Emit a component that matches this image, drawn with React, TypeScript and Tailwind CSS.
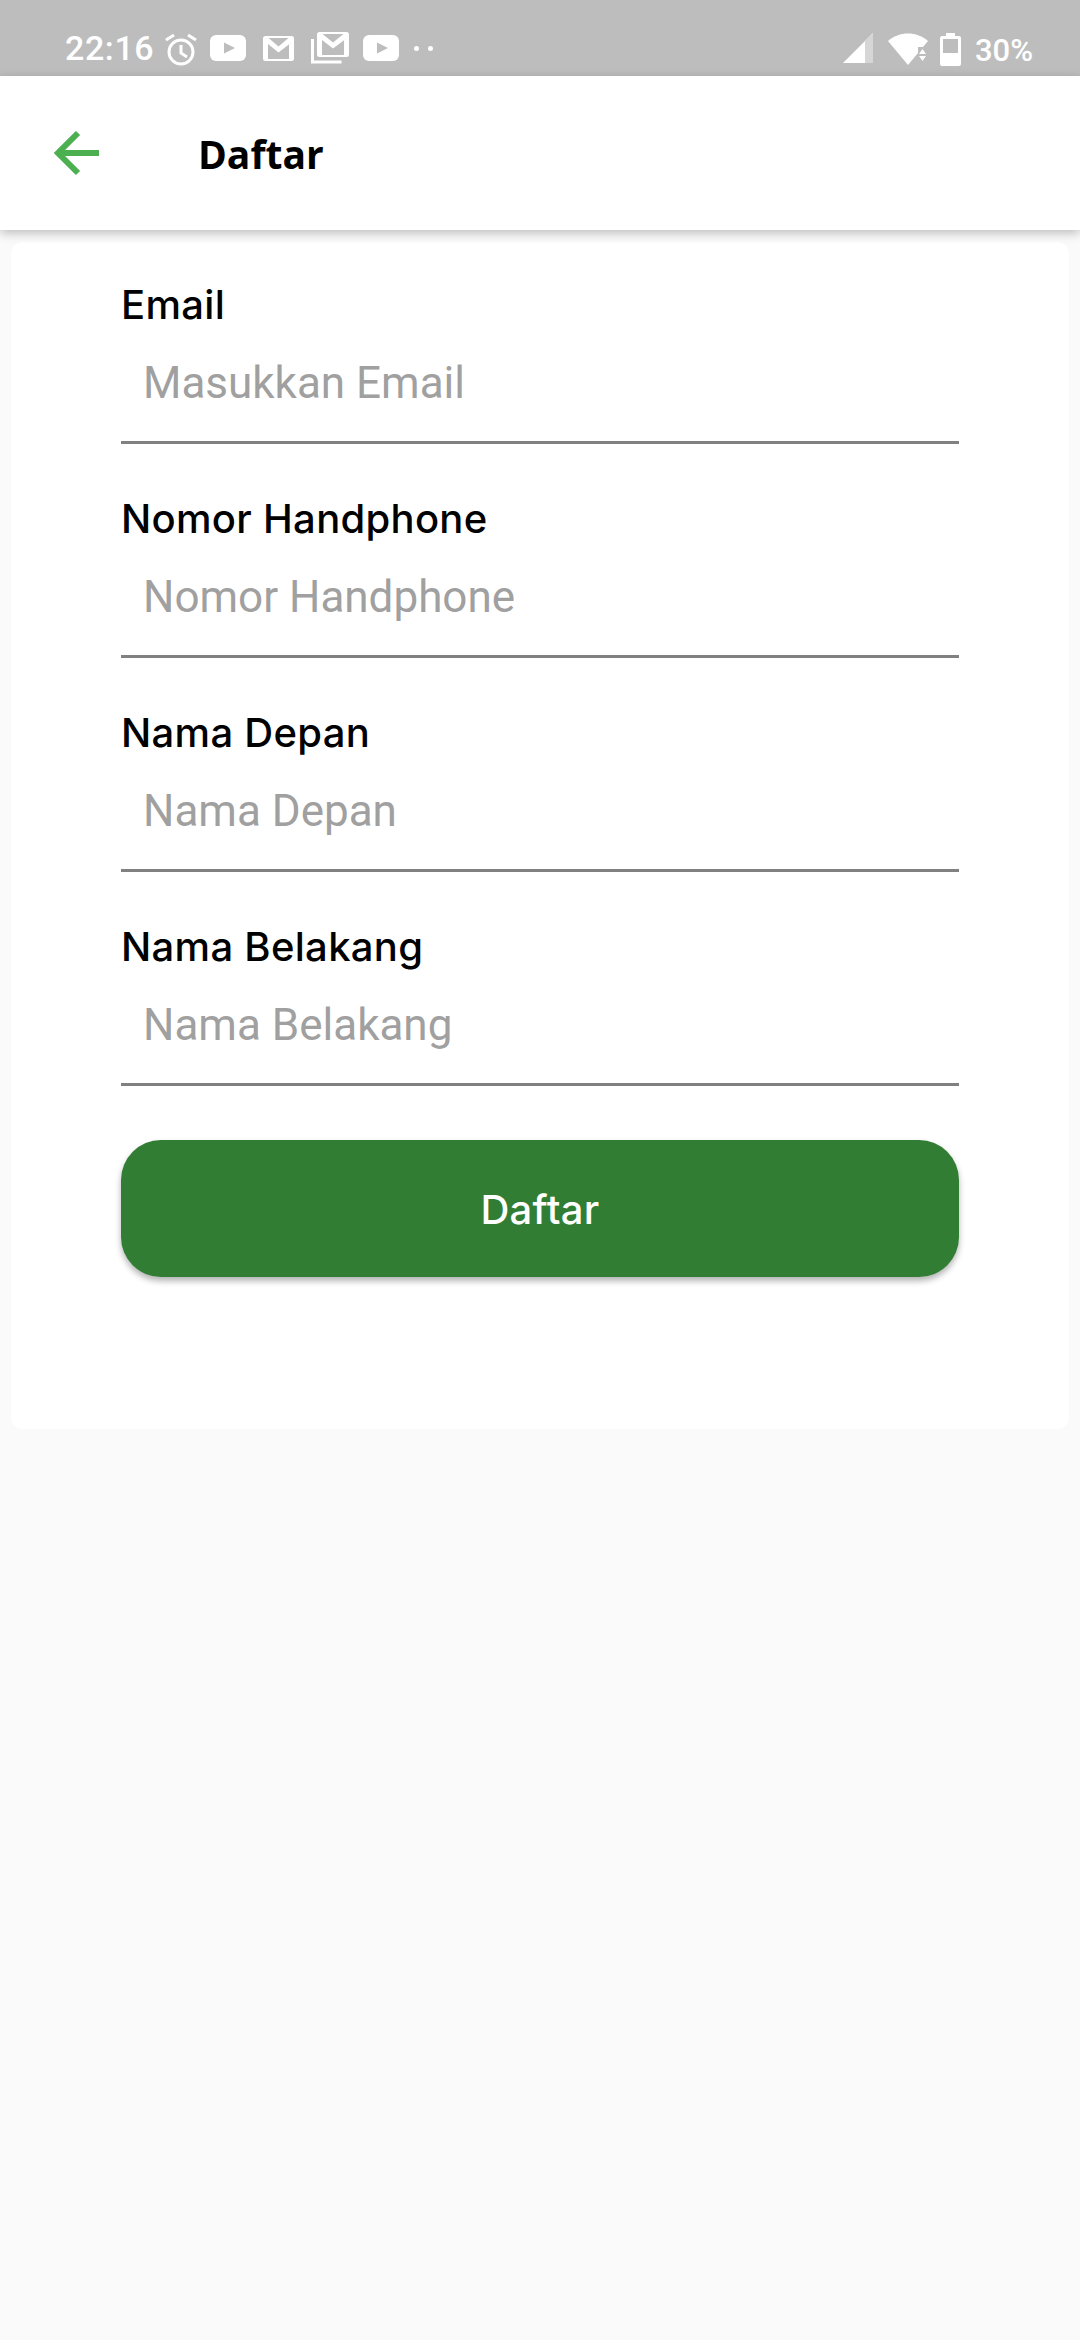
const fields = [
  { label: "Email", placeholder: "Masukkan Email" },
  { label: "Nomor Handphone", placeholder: "Nomor Handphone" },
  { label: "Nama Depan", placeholder: "Nama Depan" },
  { label: "Nama Belakang", placeholder: "Nama Belakang" },
];

function YoutubeIcon() {
  return (
    <svg width="36" height="26" viewBox="0 0 36 26">
      <rect width="36" height="26" rx="6" fill="#fff" />
      <path d="M14 7.500 25 13 14 18.500z" fill="#bdbdbd" />
    </svg>
  );
}

function StatusBar() {
  return (
    <div className="h-[76px] bg-[#bdbdbd] flex items-start justify-between pl-[65px] pr-[47px] pt-[33px] text-white font-['Roboto',sans-serif]">
      <div className="flex items-center h-[30px]">
        <span className="text-[34px] font-medium leading-[30px] tracking-[0.6px] w-[97px]">22:16</span>
        <svg width="36" height="34" viewBox="0 0 36 34" className="ml-[1px] mt-[4px]" fill="none" stroke="#fff">
          <circle cx="18" cy="19" r="12" strokeWidth="3" />
          <path d="M18 12v8l6 4" strokeWidth="3" />
          <path d="M3 7l8-5M33 7l-8-5" strokeWidth="3" />
        </svg>
        <div className="ml-[11px]"><YoutubeIcon /></div>
        <svg width="31" height="25" viewBox="0 0 31 25" className="ml-[17px]">
          <rect x="1" y="1" width="29" height="23" rx="1.500" fill="none" stroke="#fff" strokeWidth="2" />
          <path d="M2 2h3.500L15.500 10.500 25.500 2H29v4L15.500 16.500 5 8v16H2zM26 8.500V24h3V6z" fill="#fff" />
        </svg>
        <svg width="38" height="32" viewBox="0 0 38 32" className="ml-[17px]">
          <path d="M1.500 7v23h29" fill="none" stroke="#fff" strokeWidth="3" />
          <rect x="7" y="1" width="30" height="23" rx="1.500" fill="none" stroke="#fff" strokeWidth="2" />
          <path d="M8 2h3.500L22 10.500 32.500 2H36v4L22 16.500 11 8v16H8zM33 8.500V24h3V6z" fill="#fff" />
        </svg>
        <div className="ml-[14px]"><YoutubeIcon /></div>
        <div className="ml-[15px] flex gap-[9px]">
          <span className="w-[5px] h-[5px] rounded-full bg-white" />
          <span className="w-[5px] h-[5px] rounded-full bg-white" />
        </div>
      </div>
      <div className="flex items-center h-[32px]">
        <svg width="32" height="32" viewBox="0 0 32 32">
          <path d="M1 30 31 0v30z" fill="#fff" />
          <path d="M23 8 31 0v30h-8z" fill="#d6d6d6" />
        </svg>
        <svg width="40" height="32" viewBox="0 0 40 32" className="ml-[14px]">
          <path d="M0 8C11-2 29-2 40 8L20 32z" fill="#fff" />
          <path d="M30 31V14h10v17z" fill="#bdbdbd" />
          <path d="M31 21h7l-3.500-5z M31 23h7l-3.500 5z" fill="#fff" />
        </svg>
        <svg width="21" height="33" viewBox="0 0 21 33" className="ml-[12px]">
          <path d="M6 0h9v3h4a2 2 0 0 1 2 2v26a2 2 0 0 1-2 2H2a2 2 0 0 1-2-2V5a2 2 0 0 1 2-2h4z" fill="#fff" />
          <rect x="3" y="6" width="15" height="14" fill="#bdbdbd" />
        </svg>
        <span className="ml-[14px] text-[31px] font-medium leading-[30px] pt-[4px] font-['Roboto',sans-serif]">30%</span>
      </div>
    </div>
  );
}

export default function App() {
  return (
    <div className="min-h-[2340px] bg-[#fafafa] flex flex-col">
      <StatusBar />

      {/* Header */}
      <div className="h-[154px] bg-white flex items-center shadow-[0_3px_10px_rgba(0,0,0,0.25)] relative">
        <svg width="46" height="46" viewBox="0 0 46 46" fill="none" stroke="#4caf50" strokeWidth="6" className="ml-[54px] shrink-0">
          <path d="M45 23H5M24 3 4 23l20 20" />
        </svg>
        <h1 className="ml-[98px] text-[39px] font-bold text-black font-['Open_Sans',sans-serif] leading-none">Daftar</h1>
      </div>

      {/* Form card */}
      <div className="mx-[11px] mt-[12px] h-[1187px] bg-white rounded-[12px] px-[110px] pt-[43px]">
        {fields.map((f) => (
          <div key={f.label} className="h-[214px]">
            <label className="block text-[40px] font-medium leading-[40px] tracking-[0.3px] text-black font-['Inter',sans-serif]">{f.label}</label>
            <div className="h-[119px] px-[22px] pt-[31px] border-b-[3px] border-[#808080] text-[44px] leading-[54px] text-[#a0a0a0] font-['Roboto',sans-serif]">
              {f.placeholder}
            </div>
          </div>
        ))}
        <button className="mt-[-1px] w-full h-[137px] rounded-[40px] pt-[2px] bg-[#317d34] text-white text-[40px] font-medium tracking-[0.3px] font-['Inter',sans-serif] shadow-[0_4px_6px_rgba(0,0,0,0.3)]">
          Daftar
        </button>
      </div>
    </div>
  );
}
